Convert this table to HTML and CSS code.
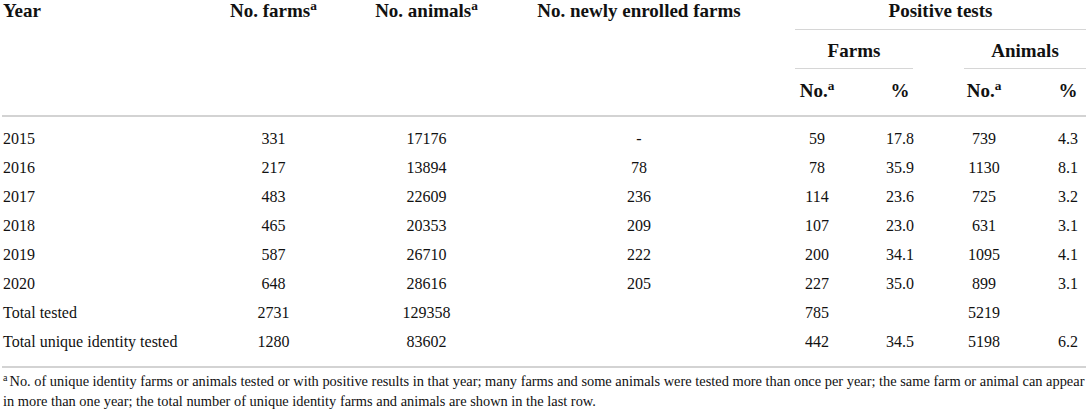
FILE: index.html
```html
<!DOCTYPE html>
<html lang="en">
<head>
    <meta charset="UTF-8">
    <title>Positive tests by year</title>
    <link rel="stylesheet" href="styles.css">
</head>
<body>
    <div class="table-wrap">
        <table class="results">
            <colgroup>
                <col class="col-year">
                <col class="col-farms">
                <col class="col-animals">
                <col class="col-new">
                <col class="col-fno">
                <col class="col-fpct">
                <col class="col-ano">
                <col class="col-apct">
            </colgroup>
            <thead>
                <tr>
                    <th class="span left" rowspan="3">Year</th>
                    <th class="span" rowspan="3">No. farms<sup>a</sup></th>
                    <th class="span" rowspan="3">No. animals<sup>a</sup></th>
                    <th class="span" rowspan="3">No. newly enrolled farms</th>
                    <th class="group" colspan="4"><div class="rule">Positive tests</div></th>
                </tr>
                <tr>
                    <th class="sub sub-farms" colspan="2"><div class="rule rule-sub">Farms</div></th>
                    <th class="sub sub-animals" colspan="2"><div class="rule rule-sub">Animals</div></th>
                </tr>
                <tr>
                    <th class="leaf fno">No.<sup>a</sup></th>
                    <th class="leaf fpct">%</th>
                    <th class="leaf ano">No.<sup>a</sup></th>
                    <th class="leaf apct">%</th>
                </tr>
            </thead>
            <tbody>
                <tr><td>2015</td><td>331</td><td>17176</td><td>-</td><td>59</td><td>17.8</td><td>739</td><td>4.3</td></tr>
                <tr><td>2016</td><td>217</td><td>13894</td><td>78</td><td>78</td><td>35.9</td><td>1130</td><td>8.1</td></tr>
                <tr><td>2017</td><td>483</td><td>22609</td><td>236</td><td>114</td><td>23.6</td><td>725</td><td>3.2</td></tr>
                <tr><td>2018</td><td>465</td><td>20353</td><td>209</td><td>107</td><td>23.0</td><td>631</td><td>3.1</td></tr>
                <tr><td>2019</td><td>587</td><td>26710</td><td>222</td><td>200</td><td>34.1</td><td>1095</td><td>4.1</td></tr>
                <tr><td>2020</td><td>648</td><td>28616</td><td>205</td><td>227</td><td>35.0</td><td>899</td><td>3.1</td></tr>
                <tr><td>Total tested</td><td>2731</td><td>129358</td><td></td><td>785</td><td></td><td>5219</td><td></td></tr>
                <tr><td>Total unique identity tested</td><td>1280</td><td>83602</td><td></td><td>442</td><td>34.5</td><td>5198</td><td>6.2</td></tr>
            </tbody>
        </table>
        <p class="footnote"><sup>a</sup>No. of unique identity farms or animals tested or with positive results in that year; many farms and some animals were tested more than once per year; the same farm or animal can appear in more than one year; the total number of unique identity farms and animals are shown in the last row.</p>
    </div>
</body>
</html>
```

FILE: styles.css
```css
body {
    margin: 0;
    background: #fff;
    color: #111;
    font-family: 'Liberation Serif', 'Times New Roman', serif;
}

.table-wrap {
    width: 1084px;
    padding-left: 2px;
}

.results {
    width: 1084px;
    table-layout: fixed;
    border-collapse: separate;
    border-spacing: 0;
}

.col-year { width: 175px; }
.col-farms { width: 193px; }
.col-animals { width: 113px; }
.col-new { width: 312px; }
.col-fno { width: 55px; }
.col-fpct { width: 88px; }
.col-ano { width: 92px; }
.col-apct { width: 56px; }

sup {
    font-size: 0.7em;
    line-height: 0;
    vertical-align: 0.5em;
}

/* header */
th {
    font-size: 19px;
    line-height: 22px;
    font-weight: bold;
    text-align: center;
    vertical-align: top;
    padding: 0;
    white-space: nowrap;
}

th.left {
    text-align: left;
    padding-left: 1px;
}

th.span {
    border-bottom: 2px solid #d3d3d3;
}

.rule {
    border-bottom: 1px solid #d6d6d6;
    padding-bottom: 7px;
}

.rule-sub {
    padding-bottom: 6px;
}

th.sub {
    padding-top: 10px;
}

th.sub-farms {
    padding-right: 25px;
}

th.sub-animals {
    padding-left: 26px;
}

th.leaf {
    padding-top: 11px;
    padding-bottom: 13px;
    border-bottom: 2px solid #d3d3d3;
}

th.fno { padding-right: 11px; }
th.fpct { padding-left: 12px; }
th.apct { padding-left: 20px; }

/* body */
td {
    font-size: 16px;
    line-height: 20px;
    padding: 4px 0 5px;
    text-align: center;
    vertical-align: top;
    white-space: nowrap;
}

td:first-child {
    text-align: left;
    padding-left: 1px;
}

td:nth-child(5) { padding-right: 11px; }
td:nth-child(6) { padding-left: 12px; }
td:nth-child(8) { padding-left: 20px; }

tbody tr:first-child td {
    padding-top: 12px;
}

tbody tr:last-child td {
    padding-bottom: 14px;
    border-bottom: 2px solid #d3d3d3;
}

.footnote {
    margin: 0;
    padding-top: 3px;
    font-size: 14.4px;
    line-height: 20px;
    padding-left: 1px;
}

.footnote sup {
    font-size: 0.7em;
    margin-right: 2px;
}
```
